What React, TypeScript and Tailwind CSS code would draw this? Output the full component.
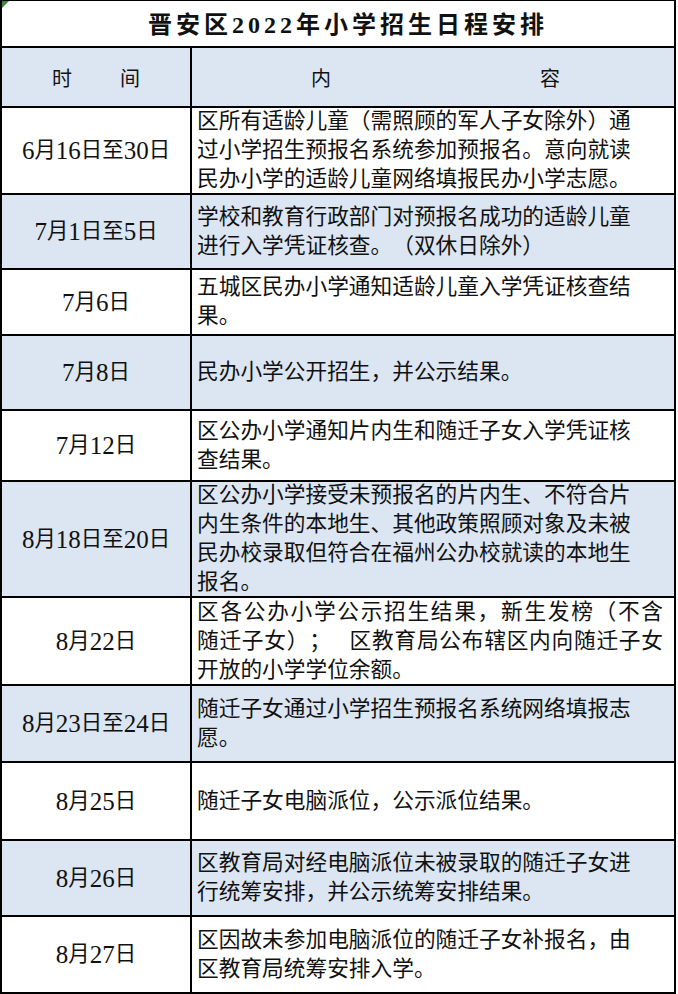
import React from 'react';

type Row = { date: string; lines: string[]; h: string; blue?: boolean };

// "{n}" in a line stands for an n-pixel gap; a leading "^" marks a justified line
const rows: Row[] = [
  {
    date: '6月16日至30日',
    lines: ['区所有适龄儿童（需照顾的军人子女除外）通', '过小学招生预报名系统参加预报名。意向就读', '民办小学的适龄儿童网络填报民办小学志愿。'],
    h: 'h-[87px]',
  },
  { date: '7月1日至5日', lines: ['学校和教育行政部门对预报名成功的适龄儿童', '进行入学凭证核查。（双休日除外）'], h: 'h-[75px]', blue: true },
  { date: '7月6日', lines: ['五城区民办小学通知适龄儿童入学凭证核查结', '果。'], h: 'h-[66px]' },
  { date: '7月8日', lines: ['民办小学公开招生，并公示结果。'], h: 'h-[75px]', blue: true },
  { date: '7月12日', lines: ['区公办小学通知片内生和随迁子女入学凭证核', '查结果。'], h: 'h-[71px]' },
  {
    date: '8月18日至20日',
    lines: ['区公办小学接受未预报名的片内生、不符合片', '内生条件的本地生、其他政策照顾对象及未被', '民办校录取但符合在福州公办校就读的本地生', '报名。'],
    h: 'h-[116px]',
    blue: true,
  },
  {
    date: '8月22日',
    lines: ['^区各公办小学公示招生结果，新生发榜（不含', '^随迁子女）；{18}区教育局公布辖区内向随迁子女', '开放的小学学位余额。'],
    h: 'h-[88px]',
  },
  { date: '8月23日至24日', lines: ['随迁子女通过小学招生预报名系统网络填报志', '愿。'], h: 'h-[77px]', blue: true },
  { date: '8月25日', lines: ['随迁子女电脑派位，公示派位结果。'], h: 'h-[78px]' },
  { date: '8月26日', lines: ['区教育局对经电脑派位未被录取的随迁子女进', '行统筹安排，并公示统筹安排结果。'], h: 'h-[76px]', blue: true },
  { date: '8月27日', lines: ['区因故未参加电脑派位的随迁子女补报名，由', '区教育局统筹安排入学。'], h: 'h-[77px]' },
];

// Excel mixes a western serif for digits with the CJK face
const DateText = ({ text }: { text: string }) => (
  <span className="text-[21.4px] leading-none">
    {text.split(/(\d+)/).map((part, i) =>
      /^\d+$/.test(part) ? (
        <span key={i} className="font-['Liberation_Serif'] text-[25px] align-[-2px]">
          {part}
        </span>
      ) : (
        <span key={i}>{part}</span>
      ),
    )}
  </span>
);

const ContentLine = ({ line }: { line: string }) => {
  const justify = line.startsWith('^');
  const text = justify ? line.slice(1) : line;
  return (
    <div className={justify ? 'w-[466px] whitespace-nowrap text-justify [text-align-last:justify]' : 'whitespace-nowrap'}>
      {text.split(/(\{\d+\})/).map((part, i) => {
        const m = part.match(/^\{(\d+)\}$/);
        if (m) return <span key={i} className="inline-block" style={{ width: Number(m[1]) }} />;
        return <span key={i}>{part}</span>;
      })}
    </div>
  );
};

export default function App() {
  return (
    <div className="w-[678px] h-[994px] bg-white font-['Liberation_Serif','Noto_Sans_CJK_SC',serif] text-[#111] [text-spacing-trim:space-all]">
      <div className="relative w-[676px] border-t-[1.5px] border-l-2 border-black">
        <svg className="absolute left-0 top-0" width="7" height="7" viewBox="0 0 7 7">
          <polygon points="0,0 7,0 0,7" fill="#3a8a3a" />
        </svg>

        {/* title */}
        <div className="h-[47px] flex items-center justify-center pl-[20px] pt-[3px] border-r-2 border-b-2 border-black">
          <span className="text-[24px] font-bold tracking-[4px]">
            晋安区<span className="font-['Liberation_Serif']">2022</span>年小学招生日程安排
          </span>
        </div>

        {/* header */}
        <div className="h-[60px] flex bg-[#dce6f2] border-b-2 border-black text-[20px]">
          <div className="w-[190px] shrink-0 flex items-center justify-between px-[50px] pt-[3px] border-r-2 border-black">
            <span>时</span>
            <span>间</span>
          </div>
          <div className="flex-1 flex items-center justify-between pl-[119px] pr-[114px] pt-[3px] border-r-2 border-black">
            <span>内</span>
            <span>容</span>
          </div>
        </div>

        {rows.map((r, i) => (
          <div key={i} className={`${r.h} flex border-b-2 border-black ${r.blue ? 'bg-[#dce6f2]' : 'bg-white'}`}>
            <div className="w-[190px] shrink-0 flex items-center justify-center border-r-2 border-black">
              <DateText text={r.date} />
            </div>
            <div className="flex-1 flex flex-col justify-center pl-[5px] text-[21.7px] leading-[29px] border-r-2 border-black">
              {r.lines.map((l, j) => (
                <ContentLine key={j} line={l} />
              ))}
            </div>
          </div>
        ))}
      </div>
    </div>
  );
}
